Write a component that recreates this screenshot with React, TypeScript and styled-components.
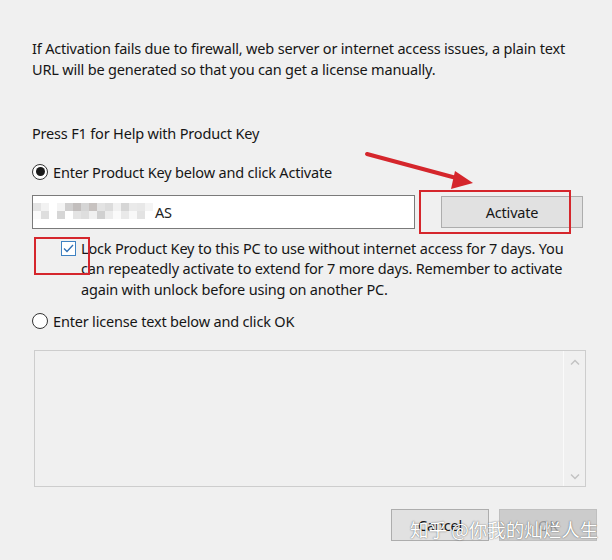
import React from "react";
import styled, { createGlobalStyle } from "styled-components";

const Global = createGlobalStyle`
  html, body { margin: 0; padding: 0; background: #f0f0f0; }
  * { box-sizing: border-box; }
`;

const Page = styled.div`
  position: relative;
  width: 612px;
  height: 560px;
  overflow: hidden;
  background: #f0f0f0;
  font-family: "Noto Sans", "Open Sans", sans-serif;
  font-size: 14.5px;
  letter-spacing: -0.18px;
  color: #161616;
  padding: 38px 0 0 30px;
  display: flex;
  flex-direction: column;
`;

const Para = styled.p<{ $top?: number }>`
  margin: ${(p) => p.$top ?? 0}px 0 0 2px;
  line-height: 20.5px;
  white-space: nowrap;
`;

const RadioRow = styled.label<{ $top: number }>`
  display: flex;
  align-items: center;
  gap: 5px;
  margin: ${(p) => p.$top}px 0 0 2px;
  height: 20px;
  line-height: 20px;
`;

const RadioCircle = styled.span<{ $checked?: boolean }>`
  width: 16px;
  height: 16px;
  border-radius: 50%;
  border: 1px solid #333;
  background: #fff;
  display: flex;
  align-items: center;
  justify-content: center;
  flex: none;
  &::after {
    content: "";
    width: 9px;
    height: 9px;
    border-radius: 50%;
    background: #1a1a1a;
    display: ${(p) => (p.$checked ? "block" : "none")};
  }
`;

const KeyRow = styled.div`
  display: flex;
  align-items: center;
  gap: 26px;
  margin: 13px 0 0 2px;
`;

const KeyInput = styled.div`
  width: 383px;
  height: 34px;
  background: #fff;
  border: 1px solid #7a7a7a;
  display: flex;
  align-items: center;
  position: relative;
`;

const Mosaic = styled.div`
  display: grid;
  grid-template-columns: repeat(17, 8px);
  grid-template-rows: 8px 8px;
  margin-top: -1px;
`;

const Tile = styled.span`
  display: block;
`;

const KeyTail = styled.span`
  margin-left: -14px;
  color: #222;
`;

const Button = styled.button<{ $w: number; $disabled?: boolean }>`
  width: ${(p) => p.$w}px;
  height: 32px;
  border: 1px solid ${(p) => (p.$disabled ? "#bfbfbf" : "#adadad")};
  background: ${(p) => (p.$disabled ? "#cccccc" : "#e1e1e1")};
  color: ${(p) => (p.$disabled ? "#9a9a9a" : "#161616")};
  font-family: inherit;
  font-size: 14.5px;
  letter-spacing: -0.18px;
  padding: 0;
  margin: 0;
`;

const CheckRow = styled.div`
  display: flex;
  align-items: flex-start;
  gap: 5px;
  margin: 9px 0 0 31px;
`;

const CheckBox = styled.span`
  width: 15px;
  height: 15px;
  border: 1px solid #3f82c2;
  background: #fff;
  flex: none;
  margin-top: 3px;
  display: flex;
  align-items: center;
  justify-content: center;
`;

const CheckText = styled.div`
  line-height: 20.5px;
  white-space: nowrap;
`;

const LicenseArea = styled.div`
  margin: 19px 0 0 4px;
  width: 552px;
  height: 137px;
  border: 1px solid #cdcdcd;
  display: flex;
`;

const LicenseBody = styled.div`
  flex: 1;
`;

const ScrollBar = styled.div`
  width: 22px;
  border-left: 1px solid #fafafa;
  display: flex;
  flex-direction: column;
  justify-content: space-between;
  align-items: center;
  padding: 8px 0 6px 0;
`;

const ButtonRow = styled.div`
  display: flex;
  justify-content: flex-end;
  gap: 10px;
  margin: 22px 15px 0 0;
`;

const Overlay = styled.div`
  position: absolute;
  left: 0;
  top: 0;
  width: 612px;
  height: 560px;
  pointer-events: none;
`;

const RedBox = styled.div<{ $x: number; $y: number; $w: number; $h: number }>`
  position: absolute;
  left: ${(p) => p.$x}px;
  top: ${(p) => p.$y}px;
  width: ${(p) => p.$w}px;
  height: ${(p) => p.$h}px;
  border: 2.5px solid #d5262c;
`;

const Watermark = styled.div`
  position: absolute;
  left: 410px;
  top: 516px;
  font-family: "Noto Sans CJK SC", "Noto Sans", sans-serif;
  font-size: 18.5px;
  letter-spacing: 0;
  color: #fff;
  text-shadow: 0 0 1px rgba(0, 0, 0, 0.5), 0 0 2px rgba(0, 0, 0, 0.25);
  white-space: nowrap;
`;

const mosaicColors = [
  ["#e4e4e4", "#f2f2f2", "#fff", "#f4f4f4", "#d0cfcf", "#c2bebd", "#d5d5d5", "#c7c2c0", "#e3e3e3", "#dcdcdc", "#f1f1f1", "#d6d6d6", "#eaeaea", "#e8e8e8", "#f4f4f4", "#fff", "#fff"],
  ["#fafafa", "#dedede", "#fff", "#d6d6d6", "#fff", "#e4e4e4", "#dedede", "#f0f0f0", "#d0d0d0", "#ececec", "#fafafa", "#e9e9e9", "#f8f8f8", "#e3e3e3", "#fff", "#fff", "#fff"],
];

export default function App() {
  return (
    <>
      <Global />
      <Page>
        <Para>
          If Activation fails due to firewall, web server or internet access issues, a plain text
          <br />
          URL will be generated so that you can get a license manually.
        </Para>
        <Para $top={44}>Press F1 for Help with Product Key</Para>
        <RadioRow $top={18}>
          <RadioCircle $checked />
          <span>Enter Product Key below and click Activate</span>
        </RadioRow>
        <KeyRow>
          <KeyInput>
            <Mosaic>
              {mosaicColors.flatMap((row, r) =>
                row.map((c, i) => <Tile key={`${r}-${i}`} style={{ background: c }} />)
              )}
            </Mosaic>
            <KeyTail>AS</KeyTail>
          </KeyInput>
          <Button $w={142}>Activate</Button>
        </KeyRow>
        <CheckRow>
          <CheckBox>
            <svg width="11" height="9" viewBox="0 0 11 9">
              <path d="M1 4.5 L4 7.5 L10 1" fill="none" stroke="#2f6fb3" strokeWidth="1.3" />
            </svg>
          </CheckBox>
          <CheckText>
            Lock Product Key to this PC to use without internet access for 7 days. You
            <br />
            can repeatedly activate to extend for 7 more days. Remember to activate
            <br />
            again with unlock before using on another PC.
          </CheckText>
        </CheckRow>
        <RadioRow $top={12}>
          <RadioCircle />
          <span>Enter license text below and click OK</span>
        </RadioRow>
        <LicenseArea>
          <LicenseBody />
          <ScrollBar>
            <svg width="10" height="6" viewBox="0 0 10 6">
              <path d="M1 5.5 L5 1.5 L9 5.5" fill="none" stroke="#c2c2c2" strokeWidth="1.4" />
            </svg>
            <svg width="10" height="6" viewBox="0 0 10 6">
              <path d="M1 0.5 L5 4.5 L9 0.5" fill="none" stroke="#c2c2c2" strokeWidth="1.4" />
            </svg>
          </ScrollBar>
        </LicenseArea>
        <ButtonRow>
          <Button $w={98}>Cancel</Button>
          <Button $w={98} $disabled>
            OK
          </Button>
        </ButtonRow>
        <Overlay>
          <svg width="612" height="560" style={{ position: "absolute", left: 0, top: 0 }}>
            <line x1="367" y1="154" x2="460" y2="179" stroke="#d5262c" strokeWidth="4" strokeLinecap="round" />
            <polygon points="473,183 455,171 451,189" fill="#d5262c" />
          </svg>
          <RedBox $x={419} $y={190} $w={152} $h={44} />
          <RedBox $x={34} $y={237} $w={56} $h={38} />
          <Watermark>知乎 @你我的灿烂人生</Watermark>
        </Overlay>
      </Page>
    </>
  );
}
